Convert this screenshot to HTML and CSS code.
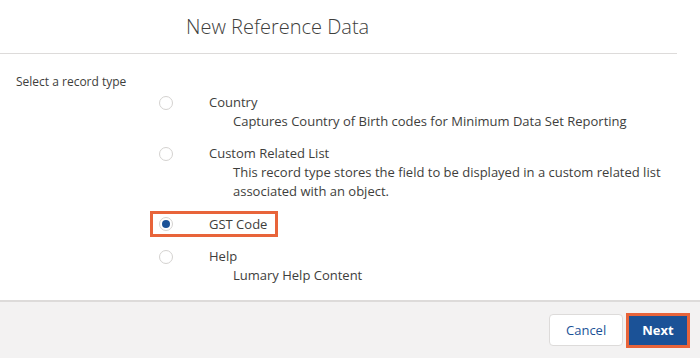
FILE: index.html
```html
<!DOCTYPE html>
<html>
<head>
<meta charset="utf-8">
<link rel="stylesheet" href="styles.css">
</head>
<body>
<div class="modal">
  <header class="modal-header">
    <h2 class="title">New Reference Data</h2>
  </header>
  <div class="modal-body">
    <div class="legend">Select a record type</div>
    <ul class="options">
      <li class="option">
        <div class="option-row"><span class="radio"></span><span class="label">Country</span></div>
        <div class="desc">Captures Country of Birth codes for Minimum Data Set Reporting</div>
      </li>
      <li class="option">
        <div class="option-row"><span class="radio"></span><span class="label">Custom Related List</span></div>
        <div class="desc">This record type stores the field to be displayed in a custom related list<br>associated with an object.</div>
      </li>
      <li class="option">
        <div class="option-row highlighted"><span class="radio checked"></span><span class="label">GST Code</span></div>
      </li>
      <li class="option">
        <div class="option-row"><span class="radio"></span><span class="label">Help</span></div>
        <div class="desc">Lumary Help Content</div>
      </li>
    </ul>
  </div>
  <footer class="modal-footer">
    <button class="btn btn-neutral">Cancel</button>
    <span class="focus-ring"><button class="btn btn-brand">Next</button></span>
  </footer>
</div>
</body>
</html>
```

FILE: styles.css
```css
* { box-sizing: border-box; }
html, body { margin: 0; padding: 0; background: #fff; }
body {
  font-family: "Open Sans", "Liberation Sans", sans-serif;
  color: #3e3e3c;
  width: 700px;
  height: 358px;
  overflow: hidden;
}
.modal { display: flex; flex-direction: column; height: 358px; }
.modal-header {
  width: 677px;
  height: 54px;
  border-bottom: 1px solid #dddbda;
  display: flex;
  align-items: center;
  padding-left: 186px;
}
.title {
  margin: 0;
  font-size: 20px;
  font-weight: 300;
  color: #3e3e3c;
}
.modal-body { flex: 1; padding: 20px 0 0 16px; }
.legend { font-size: 12px; line-height: 16px; }
.options { list-style: none; margin: 0; padding: 0 0 0 143px; }
.option { margin-top: 13px; }
.option:first-child { margin-top: 3px; }
.option-row {
  display: flex;
  width: fit-content;
  align-items: center;
  height: 19px;
  font-size: 13px;
  line-height: 19px;
}
.radio {
  width: 14px;
  height: 14px;
  border: 1px solid #d4d2d0;
  border-radius: 50%;
  margin-right: 36px;
  display: inline-flex;
  align-items: center;
  justify-content: center;
  background: #fff;
}
.radio.checked::after {
  content: "";
  width: 8px;
  height: 8px;
  border-radius: 50%;
  background: #1b5297;
}
.label { font-size: 13px; }
.desc {
  padding-left: 74px;
  font-size: 13px;
  line-height: 19px;
}
.highlighted {
  outline: 3px solid #e8643a;
  outline-offset: 0;
  height: 20px;
  padding: 0 8px 0 6px;
  margin-left: -6px;
}
.modal-footer {
  height: 58px;
  background: #f3f2f2;
  border-top: 2px solid #dddbda;
  display: flex;
  align-items: center;
  justify-content: flex-end;
  padding-right: 10px;
  gap: 3px;
}
.btn {
  font-family: "Open Sans", "Liberation Sans", sans-serif;
  font-size: 13px;
  height: 32px;
  border-radius: 4px;
  padding: 0 16px;
  cursor: pointer;
}
.btn-neutral {
  background: #fff;
  border: 1px solid #dddbda;
  color: #1b5297;
  width: 74px;
}
.focus-ring {
  display: inline-flex;
  border: 3px solid #e8643a;
}
.btn-brand {
  background: #1b5297;
  border: none;
  border-radius: 0;
  color: #fff;
  font-weight: 700;
  width: 58px;
  height: 29px;
  padding: 0;
}
```
